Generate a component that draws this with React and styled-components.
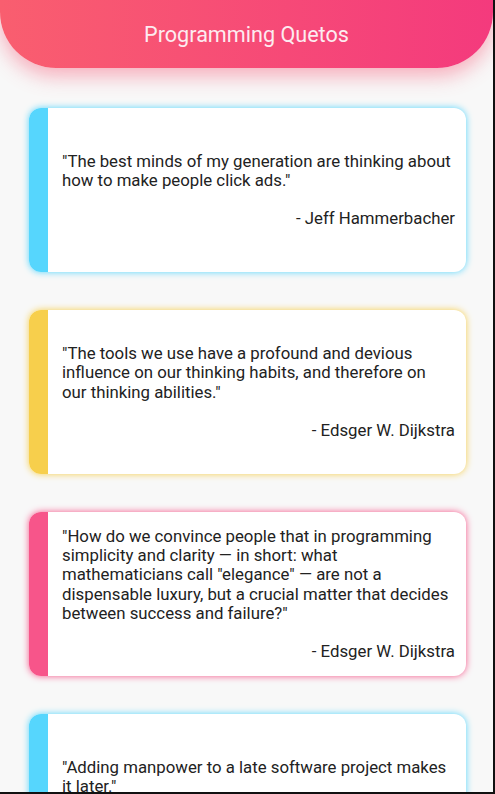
import React from "react";
import styled, { createGlobalStyle } from "styled-components";

const quotes = [
    {
        id: 1,
        text: "\"The best minds of my generation are thinking about how to make people click ads.\"",
        author: "- Jeff Hammerbacher",
        color: "#56d6fd",
    },
    {
        id: 2,
        text: "\"The tools we use have a profound and devious influence on our thinking habits, and therefore on our thinking abilities.\"",
        author: "- Edsger W. Dijkstra",
        color: "#f7cf4c",
    },
    {
        id: 3,
        text: "\"How do we convince people that in programming simplicity and clarity \u2014 in short: what mathematicians call \"elegance\" \u2014 are not a dispensable luxury, but a crucial matter that decides between success and failure?\"",
        author: "- Edsger W. Dijkstra",
        color: "#f7558a",
    },
    {
        id: 4,
        text: "\"Adding manpower to a late software project makes it later.\"",
        author: "- Fred Brooks",
        color: "#56d6fd",
    },
];

function App() {
    return (
        <>
            <GlobalStyle />
            <Frame>
                <Header>
                    <Title>Programming Quetos</Title>
                </Header>
                <List>
                    {quotes.map((item) => (
                        <Card key={item.id} color={item.color}>
                            <Bar color={item.color} />
                            <Content>
                                <Quote>{item.text}</Quote>
                                <Author>{item.author}</Author>
                            </Content>
                        </Card>
                    ))}
                </List>
            </Frame>
        </>
    );
}

export default App;

const GlobalStyle = createGlobalStyle`
    html, body {
        margin: 0;
        padding: 0;
        background: #000;
    }
    * {
        box-sizing: border-box;
    }
`;
const Frame = styled.div`
    height: 100vh;
    overflow: hidden;
    background-color: #f8f8f8;
    border-right: 2px solid #111;
    border-bottom: 2px solid #111;
    font-family: Roboto, "Noto Sans", sans-serif;
`;
const Header = styled.header`
    height: 68px;
    display: flex;
    align-items: center;
    justify-content: center;
    background: linear-gradient(90deg, #f95e6f, #f43a7d);
    border-radius: 0 0 56px 56px;
    box-shadow: 0 8px 20px rgba(246, 82, 112, 0.45);
    position: relative;
    z-index: 1;
`;
const Title = styled.h1`
    margin: 0;
    font-size: 21.6px;
    font-weight: 400;
    color: #fdebf0;
`;
const List = styled.div`
    display: flex;
    flex-direction: column;
    gap: 38px;
    padding: 40px 27px 0 29px;
`;
const Card = styled.div`
    display: flex;
    height: 164px;
    flex-shrink: 0;
    background-color: #fff;
    border-radius: 12px;
    overflow: hidden;
    box-shadow: 0 0 7px ${(p) => p.color};
`;
const Bar = styled.div`
    width: 19px;
    flex-shrink: 0;
    background-color: ${(p) => p.color};
`;
const Content = styled.div`
    flex: 1;
    display: flex;
    flex-direction: column;
    justify-content: center;
    padding: 0 11px 0 14px;
    color: #222;
    font-size: 16.8px;
    line-height: 19.3px;
`;
const Quote = styled.p`
    margin: 0 3px 19px 0;
`;
const Author = styled.span`
    text-align: right;
`;
